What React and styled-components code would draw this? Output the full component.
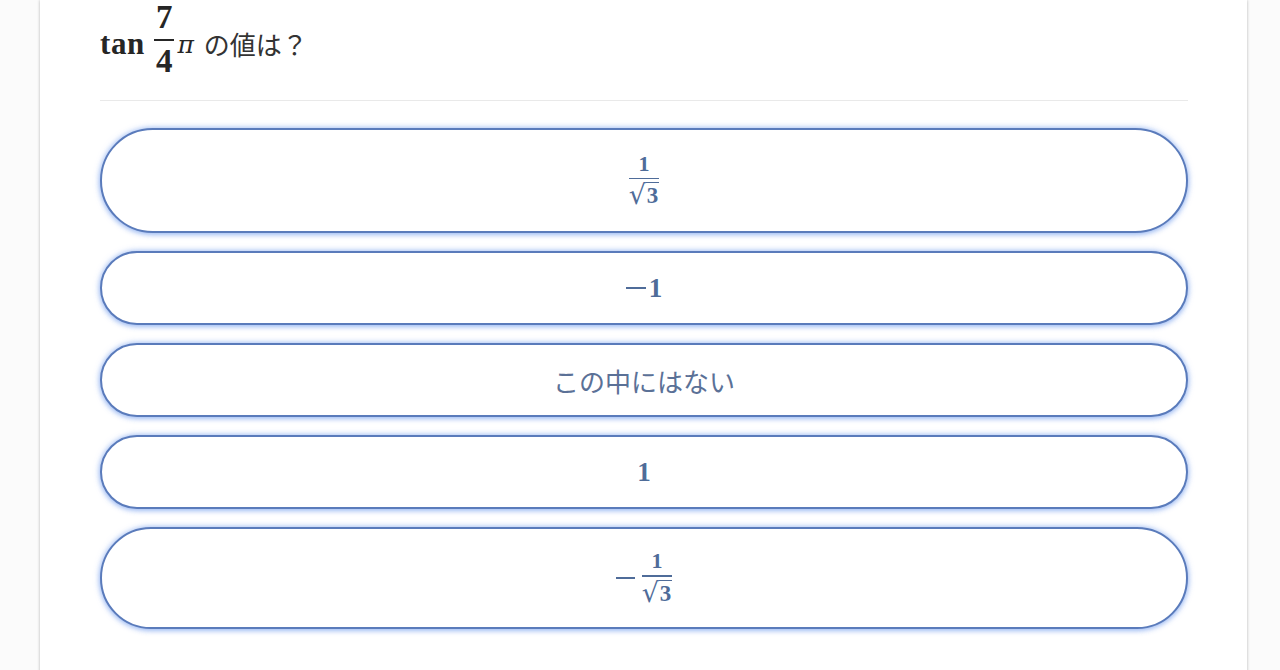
import styled, { createGlobalStyle } from "styled-components";

const GlobalStyle = createGlobalStyle`
  html, body {
    margin: 0;
    padding: 0;
    background: #ffffff;
    overflow: hidden;
  }
`;

const TEXT_BLUE = "#4f6c99";

const Page = styled.div`
  width: 1280px;
  height: 670px;
  padding-left: 40px;
  box-sizing: border-box;
  background: #fbfbfb;
`;

const Card = styled.div`
  width: 1207px;
  height: 700px;
  background: #ffffff;
  box-shadow: 0 0 3px rgba(0, 0, 0, 0.28);
  padding: 5px 59px 0 60px;
  box-sizing: border-box;
`;

const Header = styled.div`
  height: 95px;
  border-bottom: 1px solid #e9e9e9;
`;

const Question = styled.div`
  display: flex;
  align-items: center;
  height: 70px;
  color: #262626;
`;

const Tan = styled.span`
  font-family: "Liberation Serif", serif;
  font-weight: 700;
  font-size: 31px;
  letter-spacing: 0.6px;
  margin-top: 8px;
  margin-right: 11px;
`;

const Frac = styled.span`
  display: inline-flex;
  flex-direction: column;
  align-items: center;
  font-family: "Liberation Serif", serif;
  font-weight: 700;
  font-size: ${(p) => p.$size}px;
  line-height: ${(p) => p.$lh || 1};
  color: inherit;
`;

const Bar = styled.span`
  display: block;
  align-self: stretch;
  height: ${(p) => p.$thick || 1}px;
  background: currentColor;
  margin: ${(p) => p.$gap}px ${(p) => p.$pad || 0}px;
`;

const Pi = styled.span`
  font-family: "DejaVu Serif", serif;
  font-style: italic;
  font-size: 25px;
  margin: 9px 10px 0 5px;
`;

const JpText = styled.span`
  font-family: "Noto Sans CJK JP", "Noto Sans", sans-serif;
  font-size: 26px;
  margin-top: 6px;
  color: #333;
`;

const Options = styled.div`
  display: flex;
  flex-direction: column;
  gap: 18px;
  margin-top: 27px;
`;

const Option = styled.button`
  height: ${(p) => p.$h}px;
  width: 100%;
  box-sizing: border-box;
  border: 2.5px solid #5a7bbb;
  border-radius: 999px;
  background: #ffffff;
  box-shadow: 0 0 6px rgba(90, 140, 235, 0.6), 0 2px 5px rgba(90, 140, 235, 0.3);
  display: flex;
  align-items: center;
  justify-content: center;
  color: ${TEXT_BLUE};
  padding: 0;
  cursor: pointer;
`;

const MathText = styled.span`
  display: inline-flex;
  align-items: center;
  font-family: "Liberation Serif", serif;
  font-weight: 700;
  font-size: 27px;
`;

const Minus = styled.span`
  display: inline-block;
  width: ${(p) => p.$w}px;
  height: 2px;
  background: currentColor;
  margin-right: ${(p) => p.$gap}px;
`;

const OptionLabel = styled.span`
  font-family: "Noto Sans CJK JP", "Noto Sans", sans-serif;
  font-size: 26px;
  color: #5b7197;
`;

const Sqrt = styled.span`
  display: inline-flex;
  align-items: flex-start;
  font-family: "Liberation Serif", serif;
  font-weight: 700;
`;

const RadSign = styled.span`
  font-family: "DejaVu Serif", serif;
  font-weight: 400;
  font-size: 27px;
  line-height: 26px;
`;

const Radicand = styled.span`
  border-top: 1.5px solid currentColor;
  padding: 2px 1px 0 1px;
  line-height: 22px;
  font-size: 23px;
`;

const OneOverSqrt3 = () => (
  <Frac $size={22}>
    <span>1</span>
    <Bar $gap={3} $thick={1.5} />
    <Sqrt>
      <RadSign>√</RadSign>
      <Radicand>3</Radicand>
    </Sqrt>
  </Frac>
);

export default function App() {
  return (
    <>
      <GlobalStyle />
      <Page>
        <Card>
          <Header>
            <Question>
              <Tan>tan</Tan>
              <Frac $size={33} $lh={0.9}>
                <span>7</span>
                <Bar $gap={6} $thick={2} $pad={-2} />
                <span>4</span>
              </Frac>
              <Pi>π</Pi>
              <JpText>の値は？</JpText>
            </Question>
          </Header>
          <Options>
            <Option $h={105}>
              <OneOverSqrt3 />
            </Option>
            <Option $h={74}>
              <MathText>
                <Minus $w={20} $gap={3} />1
              </MathText>
            </Option>
            <Option $h={74}>
              <OptionLabel>この中にはない</OptionLabel>
            </Option>
            <Option $h={74}>
              <MathText>1</MathText>
            </Option>
            <Option $h={102}>
              <Minus $w={19} $gap={7} />
              <OneOverSqrt3 />
            </Option>
          </Options>
        </Card>
      </Page>
    </>
  );
}
